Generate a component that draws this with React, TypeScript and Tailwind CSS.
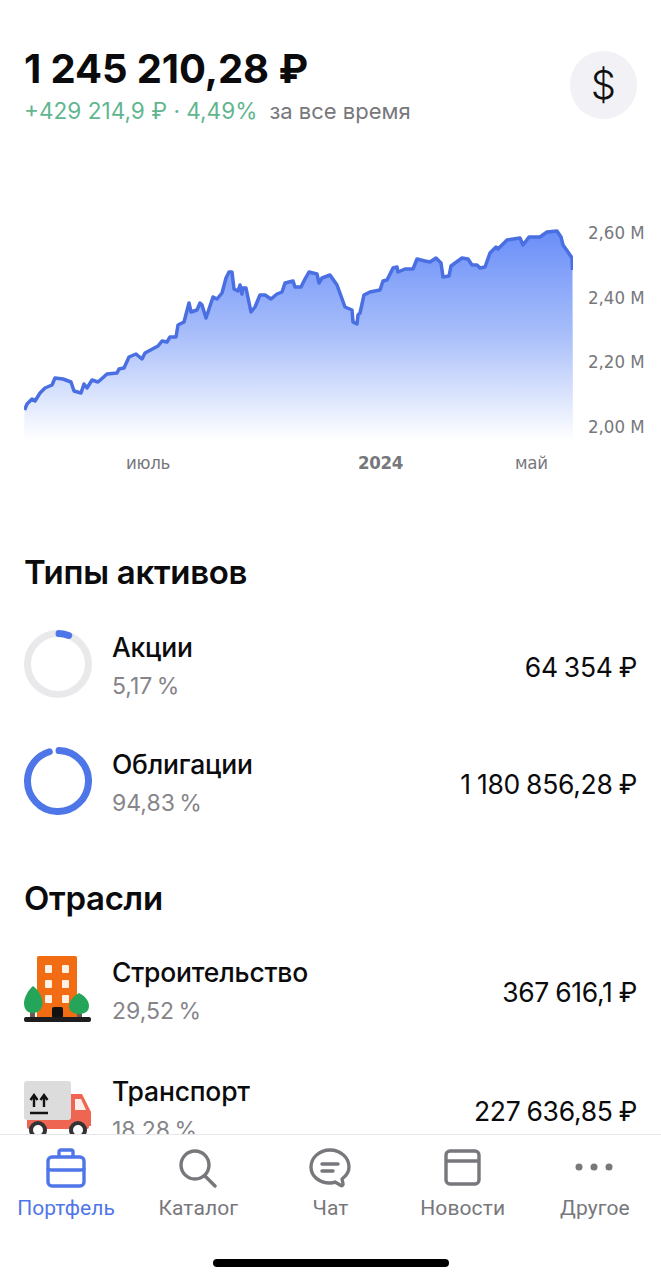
const chartPoints = "24.5,410 27,404 32,399 35,401 40,393 45,388 52,385 55,378 63,379 71,382 74,391 81,393 84,384 87,388 92,380 98,382 107,374 117,373 119,369 124,368 129,357 136,354 142,359 145,353 158,346 162,341 167,342 170,337 176,337 178,325 184,322 189,303 191,312 197,310 200,303 202,305 206,318 213,297 217,299 222,293 226,278 229,272 232,272 234,289 238,291 240,285 242,294 243,288 246,288 251,312 255,307 260,295 265,295 271,299 277,294 282,292 285,283 293,281 295,287 301,287 305,279 309,272 317,274 319,283 322,278 330,275 337,285 345,307 352,310 353,322 357,324 358,315 360,313 364,295 370,292 380,290 383,281 387,280 393,268 397,267 398,272 405,269 413,269 417,259 425,261 430,262 436,258 441,263 443,277 449,276 451,266 462,258 468,259 472,265 477,265 480,268 485,267 490,253 496,247 498,249 507,240 520,238 523,245 529,237 540,237 547,232 557,231 561,237 563,245 568,252 572,258 572.5,270";

function Chart() {
  return (
    <svg className="block h-[220px] w-[549px] shrink-0" viewBox="24 225 549 220">
      <defs>
        <linearGradient id="area" x1="0" y1="0" x2="0" y2="1">
          <stop offset="0" stopColor="#6a8ef8" />
          <stop offset="0.5" stopColor="#a9bffa" />
          <stop offset="1" stopColor="#ffffff" />
        </linearGradient>
      </defs>
      <polygon points={`${chartPoints} 573,440 24,440`} fill="url(#area)" />
      <polyline points={chartPoints} fill="none" stroke="#4a6fe2" strokeWidth="3.5" strokeLinejoin="round" />
    </svg>
  );
}

function Ring({ value, track }: { value: number; track: string }) {
  return (
    <svg className="h-[68px] w-[68px] shrink-0" viewBox="0 0 68 68">
      <circle cx="34" cy="34" r="30.5" fill="none" stroke={track} strokeWidth="7" />
      <circle
        cx="34"
        cy="34"
        r="30.5"
        fill="none"
        stroke="#4f76e8"
        strokeWidth="7"
        strokeLinecap="round"
        pathLength={100}
        strokeDasharray={`${value} ${100 - value}`}
        transform="rotate(-88 34 34)"
      />
    </svg>
  );
}

function Building() {
  return (
    <svg className="h-[68px] w-[68px] shrink-0" viewBox="0 0 68 68">
      <rect x="13" y="1" width="40" height="62" rx="1.5" fill="#f26c14" />
      {[0, 1, 2].map((r) => (
        <g key={r} fill="#fdf1e6">
          <rect x="21" y={10 + r * 15} width="7" height="8" rx="1" />
          <rect x="38" y={10 + r * 15} width="7" height="8" rx="1" />
        </g>
      ))}
      <rect x="28" y="52" width="11" height="11" rx="2" fill="#111" />
      <rect x="6" y="52" width="5" height="11" fill="#6d5a52" />
      <rect x="53" y="55" width="5" height="8" fill="#6d5a52" />
      <path d="M9 31 C15 35 18.500 43 18.500 48 C18.500 55 13 58 9 58 C4 58 0 55 0 48 C0 43 4 35 9 31 Z" fill="#25a559" />
      <path d="M55 38 C61 41 65 46 65 51 C65 57 60 59 55 59 C50 59 45 57 45 51 C45 46 50 41 55 38 Z" fill="#25a559" />
      <rect x="0" y="62" width="67" height="5" rx="2" fill="#1d1d1f" />
    </svg>
  );
}

function Truck() {
  return (
    <svg className="h-[68px] w-[68px] shrink-0" viewBox="0 -6 68 68">
      <path d="M46 14 H58 L67 32 V46 H46 Z" fill="#ee6552" />
      <path d="M51 19 H57 L62 30 H51 Z" fill="#fbeee8" />
      <rect x="3" y="38" width="62" height="11" rx="2" fill="#ee6552" />
      <rect x="0" y="1" width="47" height="39" rx="3" fill="#dcdcdc" />
      <path d="M10 27 V16 M6.500 20 L10 15 L13.500 20 M20 27 V16 M16.500 20 L20 15 L23.500 20 M6 33 H24" stroke="#111" strokeWidth="2.4" fill="none" />
      <circle cx="14" cy="50" r="7" fill="#fff" stroke="#333" strokeWidth="4" />
      <circle cx="54" cy="50" r="7" fill="#fff" stroke="#333" strokeWidth="4" />
    </svg>
  );
}

function Row({ icon, name, share, amount, className }: { icon: React.ReactNode; name: string; share: string; amount: string; className: string }) {
  return (
    <div className={`flex h-[68px] items-center ${className}`}>
      {icon}
      <div className="ml-[20px] flex-1 pt-[4px]">
        <div className="text-[26.5px] leading-[34px] font-medium tracking-[-0.2px] text-[#0b0b0d]">{name}</div>
        <div className="mt-[6px] text-[23px] leading-[32px] [word-spacing:-2px] text-[#85858a]">{share}</div>
      </div>
      <div className="mt-[7px] text-[26.5px] font-normal tracking-[-0.3px] [word-spacing:-1px] text-[#0b0b0d]">{amount}</div>
    </div>
  );
}

const tabs = [
  {
    label: "Портфель",
    active: true,
    icon: (
      <>
        <rect x="3" y="9" width="36" height="29" rx="4" />
        <path d="M14 9 V4 Q14 2 16 2 H26 Q28 2 28 4 V9 M3 20 Q3 22 7 22 H35 Q39 22 39 20 M18 22 H24" />
      </>
    ),
  },
  {
    label: "Каталог",
    icon: (
      <>
        <circle cx="18" cy="17" r="14" />
        <path d="M28 28 L38 38" strokeLinecap="round" />
      </>
    ),
  },
  {
    label: "Чат",
    icon: (
      <>
        <path d="M21 2 C10 2 2 10 2 19 C2 28 10 35 21 35 C23 35 25 34.500 26 34 L32 37.500 C33 38 34.500 37 34 35.500 L33 31 C37 28 40 24 40 19 C40 10 32 2 21 2 Z" strokeLinejoin="round" />
        <path d="M13 16 H29 M13 23 H24" strokeLinecap="round" />
      </>
    ),
  },
  {
    label: "Новости",
    icon: (
      <>
        <rect x="4" y="3" width="33" height="33" rx="4" />
        <path d="M4 13 H37" />
      </>
    ),
  },
  {
    label: "Другое",
    icon: (
      <g fill="#77777c" stroke="none">
        <circle cx="5" cy="19" r="3.500" />
        <circle cx="20" cy="19" r="3.500" />
        <circle cx="35" cy="19" r="3.500" />
      </g>
    ),
  },
];

export default function App() {
  return (
    <div className="flex h-[1280px] w-[661px] flex-col overflow-hidden bg-white font-['Inter','Noto_Sans',sans-serif]">
      <main className="min-h-0 flex-1 overflow-hidden px-6">
        <header className="flex items-start justify-between pt-[51px]">
          <div>
            <div className="text-[40px] leading-[36px] font-bold tracking-[-0.1px] text-[#0b0b0d]">1 245 210,28 ₽</div>
            <div className="mt-[9px] flex text-[22.6px] leading-[30px]">
              <span className="text-[#62b68f]">+429 214,9 ₽ · 4,49%</span>
              <span className="ml-[12px] text-[22px] text-[#77777c]">за все время</span>
            </div>
          </div>
          <button className="flex h-[68px] w-[67px] items-center justify-center rounded-full bg-[#f2f2f6] text-[40px] font-light text-[#111]">$</button>
        </header>

        <section className="mt-[99px] flex">
          <Chart />
          <div className="ml-[15px] flex h-[220px] flex-col justify-between font-['DejaVu_Sans',sans-serif] text-[18.5px] leading-[24px] whitespace-nowrap [font-stretch:condensed] text-[#77777c]">
            <span className="mt-[-4px]">2,60 M</span>
            <span>2,40 M</span>
            <span>2,20 M</span>
            <span className="mb-[6px]">2,00 M</span>
          </div>
        </section>
        <div className="mt-[6px] flex pl-[102px] font-['DejaVu_Sans',sans-serif] text-[18.5px] leading-[24px] tracking-[-0.3px] [font-stretch:condensed] text-[#77777c]">
          <span className="w-[232px]">июль</span>
          <span className="w-[157px] font-bold">2024</span>
          <span>май</span>
        </div>

        <h2 className="mt-[75px] text-[33px] leading-[44px] font-semibold tracking-[-0.3px] text-[#0b0b0d]">Типы активов</h2>
        <Row className="mt-[36px]" icon={<Ring value={5.17} track="#e9e9ec" />} name="Акции" share="5,17 %" amount="64 354 ₽" />
        <Row className="mt-[49px]" icon={<Ring value={94.83} track="transparent" />} name="Облигации" share="94,83 %" amount="1 180 856,28 ₽" />

        <h2 className="mt-[61px] text-[33px] leading-[44px] font-semibold tracking-[-0.3px] text-[#0b0b0d]">Отрасли</h2>
        <Row className="mt-[35px]" icon={<Building />} name="Строительство" share="29,52 %" amount="367 616,1 ₽" />
        <Row className="mt-[51px]" icon={<Truck />} name="Транспорт" share="18,28 %" amount="227 636,85 ₽" />
      </main>

      <nav className="h-[146px] shrink-0 border-t border-[#e6e6ea] bg-white">
        <div className="grid grid-cols-5 pt-[13px]">
          {tabs.map((tab) => (
            <div key={tab.label} className="flex flex-col items-center">
              <svg className="h-[40px] w-[42px]" viewBox="0 0 42 40" fill="none" stroke={tab.active ? "#4f76e8" : "#77777c"} strokeWidth="3.400">
                {tab.icon}
              </svg>
              <span className={`mt-[6px] font-['Roboto',sans-serif] text-[21px] leading-[28px] tracking-[0.1px] ${tab.active ? "text-[#4f76e8]" : "text-[#77777c]"}`}>{tab.label}</span>
            </div>
          ))}
        </div>
        <div className="mx-auto mt-[37px] h-[8px] w-[236px] rounded-full bg-black" />
      </nav>
    </div>
  );
}
